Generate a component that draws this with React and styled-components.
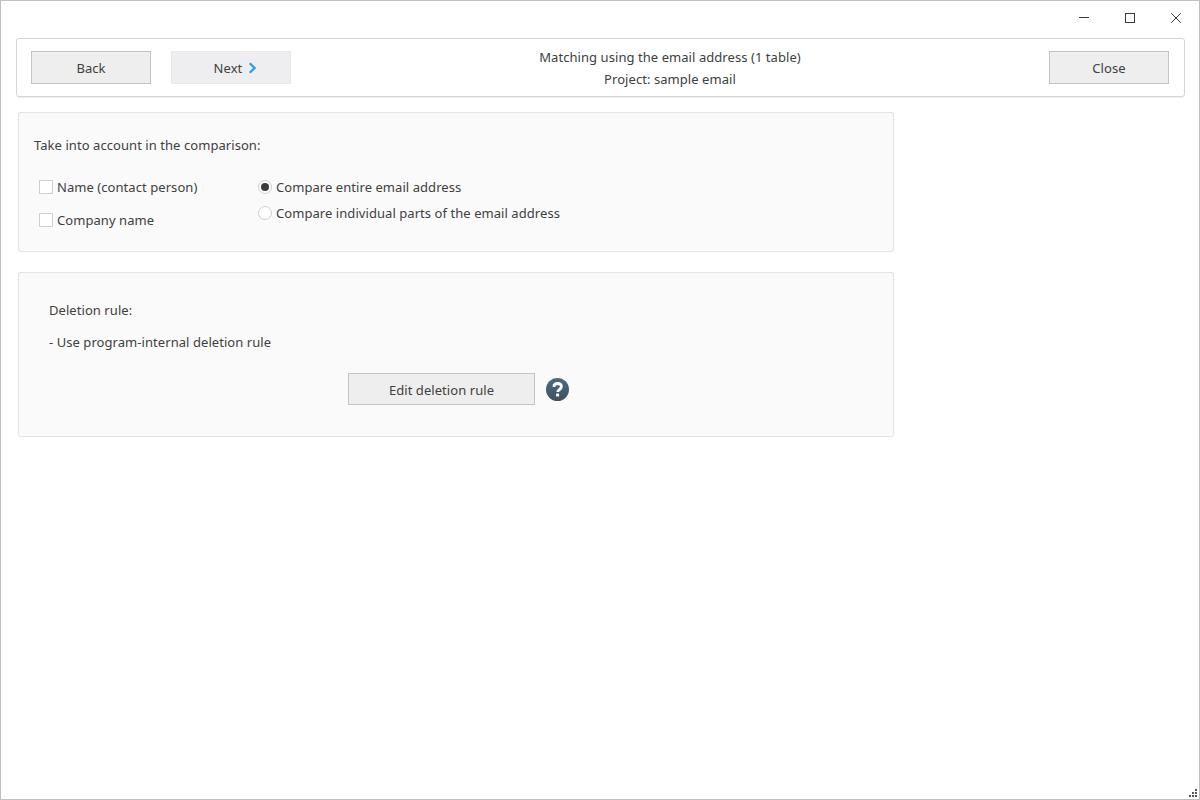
import React from "react";
import styled, { createGlobalStyle } from "styled-components";

const Global = createGlobalStyle`
  html, body { margin: 0; padding: 0; background: #fff; }
  * { box-sizing: border-box; }
  body { font-family: "Noto Sans", "Open Sans", "Liberation Sans", sans-serif; font-size: 13px; letter-spacing: 0.06px; color: #404040; }
`;

const Window = styled.div`
  position: relative;
  width: 1200px;
  height: 800px;
  border: 1px solid #bfbfbf;
  background: #fff;
  overflow: hidden;
`;

const TitleBar = styled.div`
  height: 37px;
  display: flex;
  justify-content: flex-end;
`;

const WinButton = styled.div`
  width: 46px;
  height: 33px;
  display: flex;
  align-items: center;
  justify-content: center;
  svg { display: block; }
`;

const Toolbar = styled.div`
  margin: 0 14px 0 15px;
  height: 59px;
  border: 1px solid #d6d6d6;
  border-radius: 3px;
  box-shadow: 0 1px 0 #eeeeee;
  padding: 12px 15px 0 14px;
  display: flex;
  align-items: flex-start;
  gap: 20px;
`;

const Button = styled.button`
  width: ${(p) => p.$width || 120}px;
  height: ${(p) => p.$height || 33}px;
  flex: none;
  padding: 0;
  background: ${(p) => (p.$soft ? "#eeeef0" : "#eeeeee")};
  border: 1px solid ${(p) => (p.$soft ? "#e6e9ed" : "#c4c4c4")};
  font: inherit;
  letter-spacing: inherit;
  color: inherit;
  display: flex;
  align-items: center;
  justify-content: center;
`;

const NextButton = styled(Button)`
  padding-left: 9px;
  gap: 6px;
`;

const Caption = styled.div`
  flex: 1;
  margin-top: -5px;
  text-align: center;
  line-height: 22px;
`;

const Panel = styled.section`
  width: 876px;
  margin-left: 17px;
  background: #fafafa;
  border: 1px solid #e4e4e4;
  border-radius: 3px;
  box-shadow: 0 0 1px #eeeeee;
`;

const ComparePanel = styled(Panel)`
  height: 140px;
  margin-top: 15px;
  padding: 22px 15px 0;
`;

const RulePanel = styled(Panel)`
  height: 165px;
  margin-top: 20px;
  padding: 27px 30px 0;
`;

const Line = styled.div`
  line-height: 20px;
  margin-bottom: ${(p) => p.$gap || 0}px;
`;

const Options = styled.div`
  display: grid;
  grid-template-columns: 219px 1fr;
  margin: 22px 0 0 5px;
`;

const Column = styled.div`
  display: flex;
  flex-direction: column;
  gap: ${(p) => p.$gap}px;
`;

const Option = styled.label`
  display: flex;
  align-items: center;
  line-height: 20px;
  height: 20px;
  gap: 4px;
  white-space: nowrap;
`;

const CheckBox = styled.span`
  width: 14px;
  height: 14px;
  flex: none;
  background: #fff;
  border: 1px solid #cfcfcf;
`;

const Radio = styled.span`
  width: 14px;
  height: 14px;
  flex: none;
  border-radius: 50%;
  background: #fff;
  border: 1px solid #cfcfcf;
  display: flex;
  align-items: center;
  justify-content: center;
  &::after {
    content: "";
    display: ${(p) => (p.$on ? "block" : "none")};
    width: 8px;
    height: 8px;
    border-radius: 50%;
    background: #3c3c3c;
  }
`;

const RuleActions = styled.div`
  display: flex;
  align-items: center;
  gap: 11px;
  margin: 21px 0 0 299px;
`;

const EditButton = styled(Button)`
  padding-top: 1px;
`;

const Grip = styled.svg`
  position: absolute;
  right: 1px;
  bottom: 1px;
  display: block;
`;

const HelpIcon = () => (
  <svg width="23" height="23" viewBox="0.5 0.5 23 23" aria-hidden="true">
    <defs>
      <linearGradient id="helpFill" x1="0" y1="0" x2="0" y2="1">
        <stop offset="0" stopColor="#4b6b80" />
        <stop offset="1" stopColor="#3d525f" />
      </linearGradient>
    </defs>
    <circle cx="12" cy="12" r="11.5" fill="url(#helpFill)" />
    <path d="M8.3 9.3c.2-2.2 1.8-3.3 3.8-3.3 2.2 0 3.8 1.2 3.8 3.1 0 1.5-.9 2.2-1.9 2.9-1 .7-1.8 1.2-1.8 2.6" fill="none" stroke="#fff" strokeWidth="2.8" />
    <rect x="10.6" y="16" width="3" height="3" rx=".4" fill="#fff" />
  </svg>
);

export default function App() {
  return (
    <>
      <Global />
      <Window>
        <TitleBar>
          <WinButton>
            <svg width="10" height="10" viewBox="0 0 10 10"><path d="M0 4.5h10" stroke="#3a3a3a" fill="none" /></svg>
          </WinButton>
          <WinButton>
            <svg width="10" height="10" viewBox="0 0 10 10"><rect x=".5" y=".5" width="9" height="9" stroke="#3a3a3a" fill="none" /></svg>
          </WinButton>
          <WinButton>
            <svg width="10" height="10" viewBox="0 0 10 10"><path d="M.2.2l9.6 9.6M9.8.2L.2 9.8" stroke="#3a3a3a" fill="none" /></svg>
          </WinButton>
        </TitleBar>
        <Toolbar>
          <Button>Back</Button>
          <NextButton $soft>
            Next
            <svg width="9" height="12" viewBox="0 0 9 12"><path d="M1.8 1.2L6.6 6l-4.8 4.8" fill="none" stroke="#2a9df4" strokeWidth="2.3" /></svg>
          </NextButton>
          <Caption>
            <div>Matching using the email address (1 table)</div>
            <div>Project: sample email</div>
          </Caption>
          <Button>Close</Button>
        </Toolbar>
        <ComparePanel>
          <Line>Take into account in the comparison:</Line>
          <Options>
            <Column $gap={13}>
              <Option><CheckBox />Name (contact person)</Option>
              <Option><CheckBox />Company name</Option>
            </Column>
            <Column $gap={6}>
              <Option><Radio $on />Compare entire email address</Option>
              <Option><Radio />Compare individual parts of the email address</Option>
            </Column>
          </Options>
        </ComparePanel>
        <RulePanel>
          <Line $gap={12}>Deletion rule:</Line>
          <Line>- Use program-internal deletion rule</Line>
          <RuleActions>
            <EditButton $width={187} $height={32}>Edit deletion rule</EditButton>
            <HelpIcon />
          </RuleActions>
        </RulePanel>
        <Grip width="10" height="10" viewBox="0 0 10 10">
          <path d="M7 1h2v2H7zM4 4h2v2H4zM7 4h2v2H7zM1 7h2v2H1zM4 7h2v2H4zM7 7h2v2H7z" fill="#555" />
        </Grip>
      </Window>
    </>
  );
}
